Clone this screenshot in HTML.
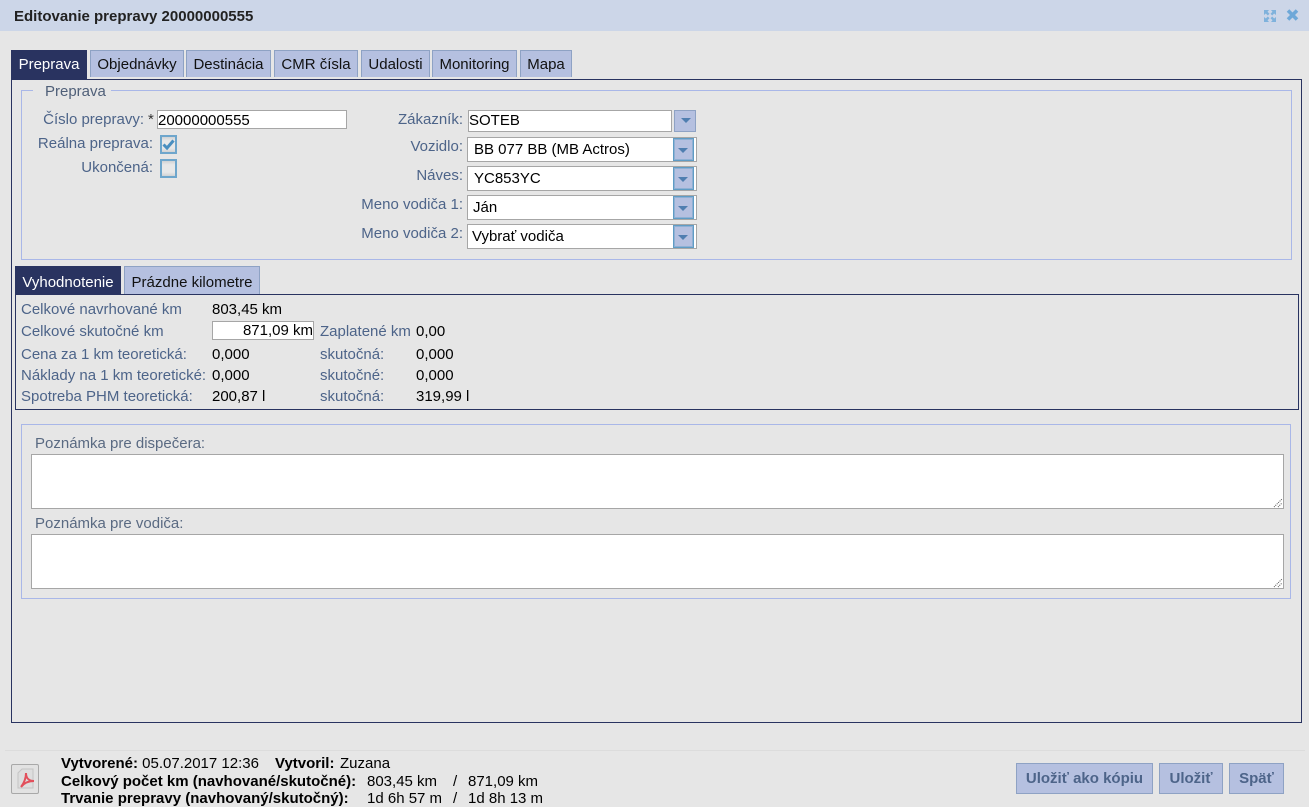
<!DOCTYPE html>
<html><head><meta charset="utf-8"><style>
html,body{margin:0;padding:0;width:1309px;height:803px;overflow:hidden;background:#e6e6e6;font-family:"Liberation Sans",Arial,sans-serif;font-size:15px;color:#000}
.a,.t,.l{position:absolute;box-sizing:border-box}
.t,.l{white-space:nowrap;line-height:16px;margin-top:1px}
.l{color:#4d6489}
.r{text-align:right}
.tab{position:absolute;box-sizing:border-box;background:#b5c0e0;border:1px solid #8ea2c4;border-bottom:0;height:27px;top:50px;line-height:28px;text-align:center;color:#111;white-space:nowrap}
.on{background:#293360;border:1px solid #293360;color:#fff;height:30px;line-height:28px}
.in{position:absolute;box-sizing:border-box;background:#fff;border:1px solid #a6a6a6;white-space:nowrap;line-height:18px}
.sel{position:absolute;box-sizing:border-box;left:467px;width:230px;height:25px;background:#fff;border:1px solid #a6a6a6;line-height:24px;white-space:nowrap}
.ab{position:absolute;box-sizing:border-box;right:2px;top:0;width:21px;height:23px;background:#b5c0e0;border:1px solid #5f9cc5;box-shadow:inset 0 0 0 1px #8fb0d4}
.ab:after,.db:after{content:"";position:absolute;left:4px;top:9px;border:5px solid transparent;border-top:5px solid #4f7eb0;border-bottom:0}
.db{position:absolute;box-sizing:border-box;left:674px;top:110px;width:22px;height:22px;background:#b5c0e0;border:1px solid #8ea2c4}
.db:after{left:6px;top:7px}
.cb{position:absolute;left:160px;width:17px;height:19px;box-sizing:border-box;background:linear-gradient(#d0d2d4,#e8e8e8 25%,#e8e8e8 75%,#d0d2d4);border:2px solid #6ea6cc}
.btn{position:absolute;box-sizing:border-box;top:763px;height:31px;background:#b5c0e0;border:1px solid #8ea2c4;color:#4d6489;font-weight:bold;text-align:center;line-height:30px}
.fs{position:absolute;box-sizing:border-box;border:1px solid #a9b7e8}
.ta{position:absolute;box-sizing:border-box;left:31px;width:1253px;height:55px;background:#fff;border:1px solid #a6a6a6}
.ta svg{position:absolute;right:0;bottom:0}
</style></head><body>
<div class="a" style="left:0;top:0;width:1309px;height:31px;background:#ccd6e8"></div>
<div class="t" style="left:14px;top:8px;font-weight:bold;color:#222">Editovanie prepravy 20000000555</div>
<svg class="a" style="left:1263px;top:9px" width="14" height="14" viewBox="0 0 14 14"><g fill="#7fb2dc"><path d="M1 1h5L4.500 2.800 6.500 4.800 4.800 6.500 2.800 4.500 1 6z"/><path d="M13 1v5L11.200 4.500 9.200 6.500 7.500 4.800 9.500 2.800 8 1z"/><path d="M1 13V8l1.800 1.500 2-2 1.700 1.700-2 2L6 13z"/><path d="M13 13H8l1.500-1.800-2-2 1.700-1.700 2 2L13 8z"/></g></svg>
<svg class="a" style="left:1286px;top:8px" width="13" height="14" viewBox="0 0 13 14"><path d="M2 2.500L11 11.500M11 2.500L2 11.500" stroke="#6ea8d8" stroke-width="3.600"/></svg>

<div class="tab on" style="left:11px;width:76px">Preprava</div>
<div class="tab" style="left:90px;width:94px">Objednávky</div>
<div class="tab" style="left:186px;width:85px">Destinácia</div>
<div class="tab" style="left:274px;width:84px">CMR čísla</div>
<div class="tab" style="left:361px;width:69px">Udalosti</div>
<div class="tab" style="left:432px;width:85px">Monitoring</div>
<div class="tab" style="left:520px;width:52px">Mapa</div>
<div class="a" style="left:11px;top:79px;width:1291px;height:644px;border:1px solid #293360"></div>

<div class="fs" style="left:21px;top:90px;width:1271px;height:170px"></div>
<div class="t" style="left:33px;top:83px;padding:0 5px 0 12px;background:#e6e6e6;color:#4f5f78">Preprava</div>

<div class="l r" style="left:20px;width:124px;top:111px">Číslo prepravy:</div>
<div class="t" style="left:148px;top:111px;color:#333">*</div>
<div class="in" style="left:157px;top:110px;width:190px;height:19px;line-height:20px">20000000555</div>
<div class="l r" style="left:20px;width:133px;top:135px">Reálna preprava:</div>
<div class="cb" style="top:135px"><svg style="position:absolute;left:0;top:1px" width="13" height="13" viewBox="0 0 13 13"><path d="M1.500 6.500L5 10 11.500 2.500" fill="none" stroke="#4a8fc0" stroke-width="3"/></svg></div>
<div class="l r" style="left:20px;width:133px;top:159px">Ukončená:</div>
<div class="cb" style="top:159px"></div>

<div class="l r" style="left:340px;width:123px;top:111px">Zákazník:</div>
<div class="in" style="left:468px;top:110px;width:204px;height:22px;line-height:19px">SOTEB</div>
<div class="db"></div>
<div class="l r" style="left:340px;width:123px;top:138px">Vozidlo:</div>
<div class="sel" style="top:137px;padding-left:6px">BB 077 BB (MB Actros)<div class="ab"></div></div>
<div class="l r" style="left:340px;width:123px;top:167px">Náves:</div>
<div class="sel" style="top:166px;padding-left:6px">YC853YC<div class="ab"></div></div>
<div class="l r" style="left:340px;width:123px;top:196px">Meno vodiča 1:</div>
<div class="sel" style="top:195px;padding-left:5px">Ján<div class="ab"></div></div>
<div class="l r" style="left:340px;width:123px;top:225px">Meno vodiča 2:</div>
<div class="sel" style="top:224px;padding-left:4px">Vybrať vodiča<div class="ab"></div></div>

<div class="tab on" style="left:15px;top:266px;width:106px;height:29px;line-height:31px">Vyhodnotenie</div>
<div class="tab" style="left:124px;top:266px;width:136px;height:28px;line-height:31px">Prázdne kilometre</div>
<div class="a" style="left:15px;top:294px;width:1284px;height:116px;border:1px solid #293360"></div>

<div class="l" style="left:21px;top:301px">Celkové navrhované km</div>
<div class="t" style="left:212px;top:301px">803,45 km</div>
<div class="l" style="left:21px;top:323px">Celkové skutočné km</div>
<div class="in r" style="left:212px;top:321px;width:102px;height:19px;padding-right:0">871,09 km</div>
<div class="l" style="left:320px;top:323px">Zaplatené km</div>
<div class="t" style="left:416px;top:323px">0,00</div>
<div class="l" style="left:21px;top:346px">Cena za 1 km teoretická:</div>
<div class="t" style="left:212px;top:346px">0,000</div>
<div class="l" style="left:320px;top:346px">skutočná:</div>
<div class="t" style="left:416px;top:346px">0,000</div>
<div class="l" style="left:21px;top:367px">Náklady na 1 km teoretické:</div>
<div class="t" style="left:212px;top:367px">0,000</div>
<div class="l" style="left:320px;top:367px">skutočné:</div>
<div class="t" style="left:416px;top:367px">0,000</div>
<div class="l" style="left:21px;top:388px">Spotreba PHM teoretická:</div>
<div class="t" style="left:212px;top:388px">200,87 l</div>
<div class="l" style="left:320px;top:388px">skutočná:</div>
<div class="t" style="left:416px;top:388px">319,99 l</div>

<div class="fs" style="left:21px;top:424px;width:1270px;height:175px"></div>
<div class="t" style="left:35px;top:435px;color:#5a6a82">Poznámka pre dispečera:</div>
<div class="ta" style="top:454px"><svg width="10" height="10" viewBox="0 0 10 10"><path d="M1 9L9 1M5 9L9 5" stroke="#555" stroke-width="1" stroke-dasharray="1 1"/></svg></div>
<div class="t" style="left:35px;top:515px;color:#5a6a82">Poznámka pre vodiča:</div>
<div class="ta" style="top:534px"><svg width="10" height="10" viewBox="0 0 10 10"><path d="M1 9L9 1M5 9L9 5" stroke="#555" stroke-width="1" stroke-dasharray="1 1"/></svg></div>

<div class="a" style="left:5px;top:750px;width:1300px;height:1px;background:#dcdcdc"></div>
<div class="a" style="left:11px;top:764px;width:28px;height:30px;background:#e2e2e2;border:1px solid #a8a8a8;border-radius:2px"></div>
<svg class="a" style="left:15px;top:768px" width="22" height="23" viewBox="0 0 22 23"><path d="M7 1H18V20H3V5z" fill="#dedede" stroke="#c4c4c4"/><path d="M6 19C9 15 11 10 11 5 11 10 14 13 19 13 14 13 9 15 6 19z" fill="none" stroke="#e2505c" stroke-width="2"/></svg>

<div class="t" style="left:61px;top:755px"><b>Vytvorené:</b> 05.07.2017 12:36</div>
<div class="t" style="left:275px;top:755px"><b>Vytvoril:</b></div>
<div class="t" style="left:340px;top:755px">Zuzana</div>
<div class="t" style="left:61px;top:773px;font-weight:bold">Celkový počet km (navhované/skutočné):</div>
<div class="t" style="left:367px;top:773px">803,45 km</div>
<div class="t" style="left:453px;top:773px">/</div>
<div class="t" style="left:468px;top:773px">871,09 km</div>
<div class="t" style="left:61px;top:790px;font-weight:bold">Trvanie prepravy (navhovaný/skutočný):</div>
<div class="t" style="left:367px;top:790px">1d 6h 57 m</div>
<div class="t" style="left:453px;top:790px">/</div>
<div class="t" style="left:468px;top:790px">1d 8h 13 m</div>

<div class="btn" style="left:1016px;width:137px">Uložiť ako kópiu</div>
<div class="btn" style="left:1159px;width:64px">Uložiť</div>
<div class="btn" style="left:1229px;width:55px">Späť</div>
</body></html>
